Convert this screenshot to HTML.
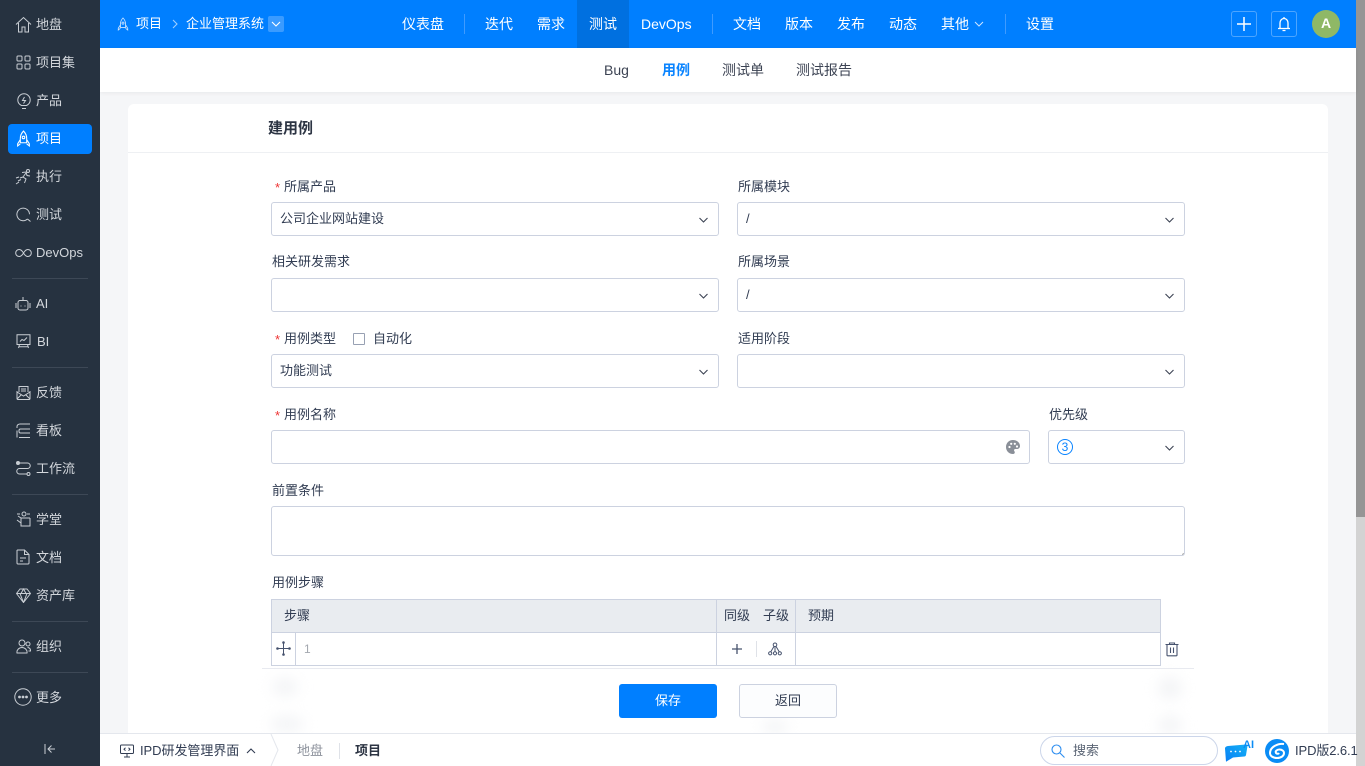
<!DOCTYPE html>
<html lang="zh-CN"><head><meta charset="utf-8"><title>建用例</title>
<style>
*{box-sizing:border-box}
html,body{margin:0;padding:0;width:1365px;height:766px;overflow:hidden;background:#f5f6f8;font-family:"Liberation Sans","Noto Sans CJK SC",sans-serif;font-size:13px;color:#313c52}
.a{position:absolute;white-space:nowrap}
#side{position:absolute;left:0;top:0;width:100px;height:766px;background:#263240}
.si{position:absolute;left:36px;color:#d3d7dc;font-size:13px;line-height:20px;white-space:nowrap;margin-top:1px}
.ic{position:absolute;fill:none;stroke:#c9ced4;stroke-width:1}
.dv{position:absolute;left:12px;width:76px;height:1px;background:#3d4856}
.n{position:absolute;top:14px;line-height:20px;color:#fff;font-size:14px;white-space:nowrap}
.ns{position:absolute;top:14px;width:1px;height:20px;background:#3f9bff}
.sub{position:absolute;top:60px;line-height:20px;font-size:14px;color:#3c4353;white-space:nowrap}
.lb{position:absolute;line-height:18px;font-size:13px;color:#313c52;white-space:nowrap}
.req:before{content:"*";color:#e33;position:absolute;left:-9px;top:1px}
.box{position:absolute;height:34px;background:#fff;border:1px solid #ccd2e0;border-radius:3px;line-height:32px;padding-left:8px;font-size:13px;color:#313c52;white-space:nowrap}
.car{position:absolute;right:10px;top:14px;width:9px;height:6px;fill:none;stroke:#3c4353;stroke-width:1.100}
.ln{position:absolute;background:#ccd2e0}
.bl{position:absolute;border-radius:50%;background:#f3f4f6;filter:blur(7px)}
</style></head><body>

<!-- main -->
<div class="a" style="left:128px;top:104px;width:1200px;height:640px;background:#fff;border-radius:6px 6px 0 0"></div>
<div class="a" style="left:128px;top:152px;width:1200px;height:1px;background:#eef0f3"></div>
<div class="a" style="left:268px;top:118px;font-size:15px;font-weight:bold;line-height:22px;color:#2c3443">建用例</div>

<span class="lb req" style="left:284px;top:178px">所属产品</span>
<span class="lb" style="left:738px;top:178px">所属模块</span>
<div class="box" style="left:271px;top:202px;width:448px">公司企业网站建设<svg class="car" viewBox="0 0 9 6"><path d="M.5 1L4.500 5l4-4"/></svg></div>
<div class="box" style="left:737px;top:202px;width:448px">/<svg class="car" viewBox="0 0 9 6"><path d="M.5 1L4.500 5l4-4"/></svg></div>

<span class="lb" style="left:272px;top:253px">相关研发需求</span>
<span class="lb" style="left:738px;top:253px">所属场景</span>
<div class="box" style="left:271px;top:278px;width:448px"><svg class="car" viewBox="0 0 9 6"><path d="M.5 1L4.500 5l4-4"/></svg></div>
<div class="box" style="left:737px;top:278px;width:448px">/<svg class="car" viewBox="0 0 9 6"><path d="M.5 1L4.500 5l4-4"/></svg></div>

<span class="lb req" style="left:284px;top:330px">用例类型</span>
<div class="a" style="left:353px;top:333px;width:12px;height:12px;border:1px solid #98a1b3;border-radius:1px;background:#fff"></div>
<span class="lb" style="left:373px;top:330px">自动化</span>
<span class="lb" style="left:738px;top:330px">适用阶段</span>
<div class="box" style="left:271px;top:354px;width:448px">功能测试<svg class="car" viewBox="0 0 9 6"><path d="M.5 1L4.500 5l4-4"/></svg></div>
<div class="box" style="left:737px;top:354px;width:448px"><svg class="car" viewBox="0 0 9 6"><path d="M.5 1L4.500 5l4-4"/></svg></div>

<span class="lb req" style="left:284px;top:406px">用例名称</span>
<span class="lb" style="left:1049px;top:406px">优先级</span>
<div class="box" style="left:271px;top:430px;width:759px"></div>
<svg class="a" style="left:1005px;top:439px" width="16" height="16" viewBox="0 0 16 16"><path fill="#8a8f98" d="M8 1C4 1 1 4 1 8s3 7 7 7c1.200 0 1.800-.8 1.800-1.600 0-.5-.2-.8-.4-1.100-.2-.3-.4-.6-.4-1 0-.8.600-1.300 1.400-1.300H12c1.800 0 3-1.300 3-3C15 3.700 11.900 1 8 1z"/><circle cx="4.500" cy="8" r="1.100" fill="#fff"/><circle cx="6.200" cy="4.800" r="1.100" fill="#fff"/><circle cx="9.800" cy="4.800" r="1.100" fill="#fff"/><circle cx="12" cy="7.500" r="1.100" fill="#fff"/></svg>
<div class="box" style="left:1048px;top:430px;width:137px"><svg class="car" viewBox="0 0 9 6"><path d="M.5 1L4.500 5l4-4"/></svg></div>
<div class="a" style="left:1057px;top:439px;width:16px;height:16px;border:1.200px solid #0a84ff;border-radius:50%;color:#0a84ff;font-size:12px;line-height:14px;text-align:center">3</div>

<span class="lb" style="left:272px;top:482px">前置条件</span>
<div class="box" style="left:271px;top:506px;width:914px;height:50px"></div>
<svg class="a" style="left:1179px;top:550px" width="5" height="5"><path d="M3.500 4.500l1-1" stroke="#555" stroke-width=".8"/></svg>

<span class="lb" style="left:272px;top:574px">用例步骤</span>
<!-- steps table -->
<div class="a" style="left:271px;top:599px;width:890px;height:34px;background:#e9ecf0;border-radius:3px 3px 0 0"></div>
<div class="a" style="left:271px;top:633px;width:890px;height:33px;background:#fff"></div>
<div class="ln" style="left:271px;top:599px;width:890px;height:1px"></div>
<div class="ln" style="left:271px;top:632px;width:890px;height:1px"></div>
<div class="ln" style="left:271px;top:665px;width:890px;height:1px"></div>
<div class="ln" style="left:271px;top:599px;width:1px;height:67px"></div>
<div class="ln" style="left:295px;top:633px;width:1px;height:33px"></div>
<div class="ln" style="left:716px;top:599px;width:1px;height:67px"></div>
<div class="ln" style="left:795px;top:599px;width:1px;height:67px"></div>
<div class="ln" style="left:1160px;top:599px;width:1px;height:67px"></div>
<span class="lb" style="left:284px;top:607px">步骤</span>
<span class="lb" style="left:724px;top:607px">同级</span>
<span class="lb" style="left:763px;top:607px">子级</span>
<span class="lb" style="left:808px;top:607px">预期</span>
<span class="lb" style="left:304px;top:640px;color:#a4a8b0;font-size:12px">1</span>
<svg class="a" style="left:276px;top:641px" width="15" height="15" viewBox="0 0 15 15" fill="none" stroke="#47536e" stroke-width="1"><path d="M7.500 1.500v12M1.500 7.500h12"/><circle cx="7.500" cy="1.500" r=".8" fill="#47536e"/><circle cx="7.500" cy="13.500" r=".8" fill="#47536e"/><circle cx="1.500" cy="7.500" r=".8" fill="#47536e"/><circle cx="13.500" cy="7.500" r=".8" fill="#47536e"/></svg>
<svg class="a" style="left:730px;top:642px" width="14" height="14" viewBox="0 0 14 14" stroke="#47536e" stroke-width="1.300"><path d="M7 2v10M2 7h10"/></svg>
<div class="a" style="left:756px;top:641px;width:1px;height:16px;background:#dfe2e8"></div>
<svg class="a" style="left:768px;top:642px" width="14" height="14" viewBox="0 0 14 14" fill="none" stroke="#47536e" stroke-width="1"><circle cx="7" cy="2.800" r="1.800"/><circle cx="2.200" cy="11.300" r="1.600"/><circle cx="7" cy="11.300" r="1.600"/><circle cx="11.800" cy="11.300" r="1.600"/><path d="M7 4.600v5.100M6 4.400L2.800 9.800M8 4.400l3.200 5.400"/></svg>
<svg class="a" style="left:1164px;top:641px" width="16" height="16" viewBox="0 0 16 16" fill="none" stroke="#47536e" stroke-width="1.100"><path d="M1.500 3.500h13M5.500 3.500V2h5v1.500M3 3.500V14a.8.800 0 0 0 .8.800h8.400A.8.800 0 0 0 13 14V3.500M6.500 6.500v5.500M9.500 6.500v5.500"/></svg>

<!-- ghost rows + footer overlay -->
<div class="bl" style="left:272px;top:678px;width:26px;height:18px"></div>
<div class="bl" style="left:1158px;top:677px;width:24px;height:22px"></div>
<div class="bl" style="left:270px;top:716px;width:34px;height:16px"></div>
<div class="bl" style="left:1158px;top:716px;width:24px;height:18px"></div>
<div class="bl" style="left:762px;top:720px;width:26px;height:14px"></div>
<div class="a" style="left:262px;top:668px;width:932px;height:1px;background:#e8eaf0"></div>
<div class="a" style="left:619px;top:684px;width:98px;height:34px;background:#007fff;border-radius:3px;color:#fff;text-align:center;line-height:34px;font-size:13px">保存</div>
<div class="a" style="left:739px;top:684px;width:98px;height:34px;background:#fcfdfe;border:1px solid #ccd2e0;border-radius:3px;color:#313c52;text-align:center;line-height:32px;font-size:13px">返回</div>

<!-- scrollbar -->
<div class="a" style="left:1356px;top:0;width:9px;height:766px;background:#d3d3d3"></div>
<div class="a" style="left:1356px;top:0;width:9px;height:517px;background:#959595"></div>

<!-- header -->
<div class="a" style="left:100px;top:0;width:1256px;height:48px;background:#007fff"></div>
<div class="a" style="left:577px;top:0;width:52px;height:48px;background:#0070e0"></div>
<svg class="a" style="left:117px;top:17px" width="12" height="14" viewBox="0 0 14 16" fill="none" stroke="#cfe5ff" stroke-width="1"><path d="M7 1C5 3 4 5 4 8v4h6V8c0-3-1-5-3-7zM4 9l-2.500 4v2L4 13M10 9l2.500 4v2L10 13"/><circle cx="7" cy="7" r="1.200"/></svg>
<span class="a" style="left:136px;top:14px;line-height:20px;color:#fff">项目</span>
<svg class="a" style="left:171px;top:18px" width="8" height="12" viewBox="0 0 8 12" fill="none" stroke="#9fceff" stroke-width="1.100"><path d="M2 2l4 4-4 4"/></svg>
<span class="a" style="left:186px;top:14px;line-height:20px;color:#fff">企业管理系统</span>
<div class="a" style="left:268px;top:16px;width:16px;height:16px;background:#3a9bff;border-radius:2px"></div>
<svg class="a" style="left:271px;top:21px" width="10" height="7" viewBox="0 0 10 7" fill="none" stroke="#fff" stroke-width="1.100"><path d="M1 1l4 4 4-4"/></svg>

<span class="n" style="left:402px">仪表盘</span><i class="ns" style="left:464px"></i>
<span class="n" style="left:485px">迭代</span>
<span class="n" style="left:537px">需求</span>
<span class="n" style="left:589px">测试</span>
<span class="n" style="left:641px">DevOps</span><i class="ns" style="left:712px"></i>
<span class="n" style="left:733px">文档</span>
<span class="n" style="left:785px">版本</span>
<span class="n" style="left:837px">发布</span>
<span class="n" style="left:889px">动态</span>
<span class="n" style="left:941px">其他</span>
<svg class="a" style="left:974px;top:21px" width="10" height="7" viewBox="0 0 10 7" fill="none" stroke="#cfe5ff" stroke-width="1"><path d="M1 1l4 4 4-4"/></svg>
<i class="ns" style="left:1005px"></i>
<span class="n" style="left:1026px">设置</span>

<div class="a" style="left:1231px;top:11px;width:26px;height:26px;border:1px solid #4da5ff;border-radius:3px"></div>
<svg class="a" style="left:1237px;top:17px" width="14" height="14" viewBox="0 0 14 14" stroke="#fff" stroke-width="1.500"><path d="M7 0v14M0 7h14"/></svg>
<div class="a" style="left:1271px;top:11px;width:26px;height:26px;border:1px solid #4da5ff;border-radius:3px"></div>
<svg class="a" style="left:1277px;top:16px" width="14" height="16" viewBox="0 0 14 16" fill="none" stroke="#fff" stroke-width="1.300"><path d="M3 12V7c0-2.500 1.700-4.500 4-4.500s4 2 4 4.500v5M1 12.500h12M7 1v1.500M5.500 14.500h3"/></svg>
<div class="a" style="left:1312px;top:10px;width:28px;height:28px;border-radius:50%;background:#8fb866;color:#fff;text-align:center;line-height:27px;font-size:14px;font-weight:bold">A</div>

<!-- subnav -->
<div class="a" style="left:100px;top:48px;width:1256px;height:44px;background:#fff;box-shadow:0 1px 4px rgba(0,0,0,.06)"></div>
<span class="sub" style="left:604px">Bug</span>
<span class="sub" style="left:662px;color:#0a84ff;font-weight:bold">用例</span>
<span class="sub" style="left:722px">测试单</span>
<span class="sub" style="left:796px">测试报告</span>

<!-- sidebar -->
<div id="side">
<div class="a" style="left:8px;top:124px;width:84px;height:30px;background:#007fff;border-radius:4px"></div>
<svg class="ic" style="left:15px;top:16px" width="17" height="17" viewBox="0 0 17 17"><path d="M1 8.500L8.500 1.500 16 8.500M3.500 7v9h3.500v-5h3v5h3.500V7"/></svg>
<span class="si" style="top:14px">地盘</span>
<svg class="ic" style="left:16px;top:55px" width="15" height="15" viewBox="0 0 15 15"><rect x="1" y="1" width="5" height="5" rx="1"/><rect x="9" y="1" width="5" height="5" rx="1"/><rect x="1" y="9" width="5" height="5" rx="1"/><rect x="9" y="9" width="5" height="5" rx="1"/></svg>
<span class="si" style="top:52px">项目集</span>
<svg class="ic" style="left:17px;top:93px" width="14" height="17" viewBox="0 0 14 17"><path d="M4.500 12.500C2 11.300.8 9.300.8 7a6.200 6.200 0 0 1 12.400 0c0 2.300-1.200 4.300-3.700 5.500zM5 15.500h4M7.500 4L5.500 7.500h3L6.500 10.500"/></svg>
<span class="si" style="top:90px">产品</span>
<svg class="ic" style="left:16px;top:130px;stroke:#fff" width="15" height="17" viewBox="0 0 14 16" stroke-width=".9"><path d="M7 1C5 3 4 5 4 8v4h6V8c0-3-1-5-3-7zM4 9l-2.500 4v2L4 13M10 9l2.500 4v2L10 13"/><circle cx="7" cy="7" r="1.200"/></svg>
<span class="si" style="top:128px;color:#fff">项目</span>
<svg class="ic" style="left:15px;top:168px" width="17" height="17" viewBox="0 0 17 17"><circle cx="13" cy="3" r="1.500"/><path d="M7 4.500l4-.5 1 3.500 3 .5M11 5L8 9l3 2-1.500 4M8 9l-3 1M1 10l3-1M3 13l3-1.500M1 16l3-2"/></svg>
<span class="si" style="top:166px">执行</span>
<svg class="ic" style="left:16px;top:207px" width="15" height="15" viewBox="0 0 15 15"><path d="M11.500 12A6.300 6.300 0 1 1 13.500 7.300M11.500 12l3 2.500"/></svg>
<span class="si" style="top:204px">测试</span>
<svg class="ic" style="left:15px;top:248px" width="17" height="10" viewBox="0 0 17 10"><path d="M8.500 5C7 2.500 5.800 1.500 4.200 1.500a3.500 3.500 0 0 0 0 7C5.800 8.500 7 7.500 8.500 5c1.500-2.500 2.700-3.500 4.300-3.500a3.500 3.500 0 0 1 0 7c-1.600 0-2.800-1-4.300-3.500z"/></svg>
<span class="si" style="top:242px">DevOps</span>
<div class="dv" style="top:278px"></div>
<svg class="ic" style="left:15px;top:296px" width="16" height="16" viewBox="0 0 16 16"><rect x="3" y="4.500" width="10" height="9.500" rx="2"/><path d="M8 1v3.500M1 7v5M15 7v5M6 9.500v1M10 9.500v1"/></svg>
<span class="si" style="top:293px">AI</span>
<svg class="ic" style="left:16px;top:334px" width="15" height="15" viewBox="0 0 15 15"><path d="M1 .8h13v9.700H1zM3.500 10.500L2.500 14M11.500 10.500l1 3.500M3 12.800h9M4 7.500l2-2 2 1 3-3"/></svg>
<span class="si" style="top:331px;left:37px">BI</span>
<div class="dv" style="top:367px"></div>
<svg class="ic" style="left:16px;top:385px" width="15" height="15" viewBox="0 0 15 15"><path d="M1 6v7.500a1 1 0 0 0 1 1h11a1 1 0 0 0 1-1V6M3 7V1.500h9V7M1 7l6.500 4L14 7M1 14l4.500-4.500M14 14L9.500 9.500M5 4h5M5 6h5"/></svg>
<span class="si" style="top:382px">反馈</span>
<svg class="ic" style="left:16px;top:423px" width="14" height="15" viewBox="0 0 14 15"><path d="M14 1H4C2.500 1 1 2 1 3.500V5M1 7.500V14.500M14 6H4.500C3.500 6 3 6.500 3 7.500V8.500C3 9.500 3.500 10 4.500 10H14M3 14.500h11"/></svg>
<span class="si" style="top:420px">看板</span>
<svg class="ic" style="left:16px;top:461px" width="15" height="15" viewBox="0 0 15 15"><circle cx="2" cy="2" r="1.500" fill="#c9ced4"/><circle cx="12.500" cy="13" r="1.500"/><path d="M4 2h7.500a2.700 2.700 0 0 1 0 5.500H3.500a2.700 2.700 0 0 0 0 5.500H11"/></svg>
<span class="si" style="top:458px">工作流</span>
<div class="dv" style="top:494px"></div>
<svg class="ic" style="left:16px;top:511px" width="15" height="16" viewBox="0 0 15 16"><circle cx="8" cy="3" r="2"/><path d="M1 3h3M11 3h3M14 7H5L2 5M5 7v8h9V7M1 9l4 3"/></svg>
<span class="si" style="top:509px">学堂</span>
<svg class="ic" style="left:16px;top:549px" width="14" height="16" viewBox="0 0 14 16"><path d="M1.500 1h7L13 5.500V14a1 1 0 0 1-1 1H2a1 1 0 0 1-1-1V1.500zM8.500 1v4.500H13M4 9h6M4 12h3"/></svg>
<span class="si" style="top:547px">文档</span>
<svg class="ic" style="left:16px;top:588px" width="15" height="15" viewBox="0 0 15 15"><path d="M4 1h7l3.500 4.500-7 9-7-9zM.5 5.500h14M4 5.500l3.500 9 3.500-9M5 5.500L7.500 1 10 5.500"/></svg>
<span class="si" style="top:585px">资产库</span>
<div class="dv" style="top:621px"></div>
<svg class="ic" style="left:16px;top:639px" width="15" height="15" viewBox="0 0 15 15"><circle cx="6" cy="4" r="3"/><circle cx="12" cy="5" r="2"/><path d="M1 14c-.5-3 2-5.500 5-5.500s5.500 2.500 5 5.500zM11.500 8.500c2 0 3.200 1.500 3 3.500h-2"/></svg>
<span class="si" style="top:636px">组织</span>
<div class="dv" style="top:672px"></div>
<svg class="ic" style="left:14px;top:688px" width="18" height="18" viewBox="0 0 18 18"><circle cx="9" cy="9" r="8.200"/><circle cx="5.500" cy="9" r=".9" fill="#c9ced4"/><circle cx="9" cy="9" r=".9" fill="#c9ced4"/><circle cx="12.500" cy="9" r=".9" fill="#c9ced4"/></svg>
<span class="si" style="top:687px">更多</span>
<svg class="ic" style="left:44px;top:744px" width="12" height="10" viewBox="0 0 12 10"><path d="M1 0v10M11 5H4M7.500 1.500L4 5l3.500 3.500"/></svg>
</div>

<!-- footer -->
<div class="a" style="left:100px;top:733px;width:1256px;height:33px;background:#fff;border-top:1px solid #e4e7ed"></div>
<svg class="a" style="left:120px;top:744px" width="14" height="14" viewBox="0 0 14 14" fill="none" stroke="#313c52" stroke-width="1"><rect x=".5" y="1" width="13" height="8.500" rx="1"/><path d="M7 9.500V13M4 13h6M5.500 3.800L4 5.200l1.500 1.400M8.500 3.800L10 5.200 8.500 6.600"/></svg>
<span class="a" style="left:140px;top:741px;line-height:20px;font-size:13px;color:#313c52;letter-spacing:-.05px">IPD研发管理界面</span>
<svg class="a" style="left:246px;top:747px" width="10" height="7" viewBox="0 0 10 7" fill="none" stroke="#313c52" stroke-width="1.100"><path d="M1 6l4-4 4 4"/></svg>
<svg class="a" style="left:270px;top:734px" width="10" height="32" viewBox="0 0 10 32" fill="none" stroke="#e4e7ed"><path d="M1 0l7 16-7 16"/></svg>
<span class="a" style="left:297px;top:741px;line-height:20px;color:#8d929c">地盘</span>
<div class="a" style="left:339px;top:743px;width:1px;height:16px;background:#dfe2e8"></div>
<span class="a" style="left:355px;top:741px;line-height:20px;font-weight:bold;color:#2c3443">项目</span>

<div class="a" style="left:1040px;top:736px;width:178px;height:29px;border:1px solid #ccd6ea;border-radius:15px;background:#fff"></div>
<svg class="a" style="left:1051px;top:744px" width="14" height="14" viewBox="0 0 14 14" fill="none" stroke="#2c8df0" stroke-width="1.100"><circle cx="5.500" cy="5.500" r="4.500"/><path d="M9 9l4.500 4.500"/></svg>
<span class="a" style="left:1073px;top:741px;line-height:20px;color:#5a6474">搜索</span>
<svg class="a" style="left:1225px;top:743px" width="23" height="20" viewBox="0 0 23 20"><defs><linearGradient id="g" x1="0" y1="1" x2="1" y2="0"><stop offset="0" stop-color="#0a7ef5"/><stop offset="1" stop-color="#12b2f5"/></linearGradient></defs><path fill="url(#g)" d="M3 3L21 1.500C22 1.500 22.500 2 22.500 3L21 12c-.2 1-.8 1.500-1.800 1.500L8 14.500 1 18.800 0 5.500C0 4 1.500 3.100 3 3z"/><circle cx="6" cy="8.500" r=".9" fill="#fff"/><circle cx="10.500" cy="8.500" r=".9" fill="#fff"/><circle cx="15" cy="8.500" r=".9" fill="#fff"/></svg>
<span class="a" style="left:1243px;top:739px;font-size:11px;line-height:12px;color:#0a8cf5;font-weight:bold;background:#fff0">AI</span>
<svg class="a" style="left:1265px;top:739px" width="24" height="24" viewBox="0 0 24 24" fill="none"><circle cx="12" cy="12" r="12" fill="#0a8cf5"/><path stroke="#fff" stroke-width="2" d="M19 5C13 4 5 8 5 14c0 3 3 5 7 5s7-2 7-5c0-2-2-3.500-4.500-3.500S10 12 11 14c.7 1 2.500 1 3 0"/></svg>
<span class="a" style="left:1295px;top:741px;line-height:20px;font-size:13px;color:#313c52;letter-spacing:-.1px">IPD版2.6.1</span>
</body></html>
